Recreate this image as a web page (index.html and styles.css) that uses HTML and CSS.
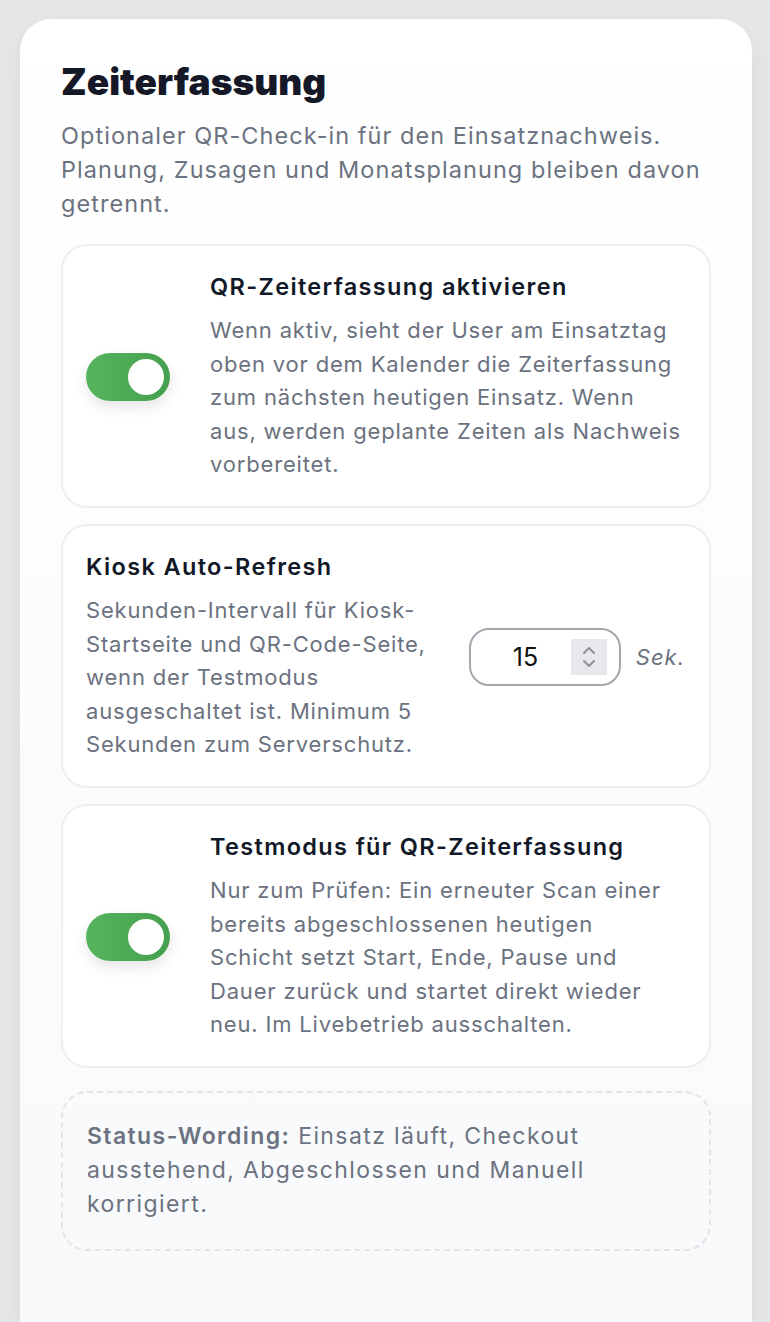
FILE: index.html
```html
<!DOCTYPE html>
<html lang="de">
<head>
<meta charset="UTF-8">
<meta name="viewport" content="width=device-width, initial-scale=1.0">
<title>Zeiterfassung</title>
<link rel="stylesheet" href="styles.css">
</head>
<body>
  <div class="panel">
    <h1>Zeiterfassung</h1>
    <p class="lead">Optionaler QR-Check-in für den Einsatznachweis. Planung, Zusagen und Monatsplanung bleiben davon getrennt.</p>

    <div class="option">
      <div class="switch-col">
        <span class="switch"><span class="knob"></span></span>
      </div>
      <div class="option-text">
        <h3>QR-Zeiterfassung aktivieren</h3>
        <p>Wenn aktiv, sieht der User am Einsatztag oben vor dem Kalender die Zeiterfassung zum nächsten heutigen Einsatz. Wenn aus, werden geplante Zeiten als Nachweis vorbereitet.</p>
      </div>
    </div>

    <div class="option option-plain">
      <div class="option-text">
        <h3>Kiosk Auto-Refresh</h3>
        <p>Sekunden-Intervall für Kiosk-Startseite und QR-Code-Seite, wenn der Testmodus ausgeschaltet ist. Minimum 5 Sekunden zum Serverschutz.</p>
      </div>
      <div class="interval">
        <div class="number-box">
          <span class="number-value">15</span>
          <span class="spinner">
            <svg width="16" height="26" viewBox="0 0 16 26" fill="none" stroke="#8b8f98" stroke-width="2" stroke-linecap="round" stroke-linejoin="round">
              <path d="M3 9 L8 4 L13 9"/>
              <path d="M3 17 L8 22 L13 17"/>
            </svg>
          </span>
        </div>
        <span class="unit">Sek.</span>
      </div>
    </div>

    <div class="option">
      <div class="switch-col">
        <span class="switch"><span class="knob"></span></span>
      </div>
      <div class="option-text">
        <h3>Testmodus für QR-Zeiterfassung</h3>
        <p>Nur zum Prüfen: Ein erneuter Scan einer bereits abgeschlossenen heutigen<br>Schicht setzt Start, Ende, Pause und Dauer zurück und startet direkt wieder neu. Im Livebetrieb ausschalten.</p>
      </div>
    </div>

    <div class="note">
      <p><strong>Status-Wording:</strong> Einsatz läuft, Checkout ausstehend, Abgeschlossen und Manuell korrigiert.</p>
    </div>
  </div>
</body>
</html>
```

FILE: styles.css
```css
body {
  margin: 0;
  background-color: #e6e7e9;
  font-family: Inter, "Noto Sans", sans-serif;
  padding: 19px 18px 0 20px;
}
.panel {
  background: linear-gradient(180deg, #ffffff 0%, #f8f9fb 100%);
  border-radius: 32px 32px 0 0;
  padding: 38px 41px 80px 41px;
  box-shadow: 0 8px 30px rgba(0, 0, 0, 0.06);
  min-height: 1200px;
}
h1 {
  margin: 0;
  font-size: 37px;
  font-weight: 900;
  letter-spacing: 0;
  color: #141827;
  line-height: 50px;
}
.lead {
  margin: 12px 0 23px;
  font-size: 23.5px;
  letter-spacing: 1.05px;
  line-height: 34px;
  color: #6b7280;
}
.option {
  display: flex;
  align-items: center;
  background: #ffffff;
  border: 2px solid #eceef1;
  border-radius: 26px;
  padding: 26px 24px 24px 23px;
  margin-bottom: 16px;
}
.switch-col {
  width: 124px;
  flex-shrink: 0;
}
.switch {
  display: flex;
  align-items: center;
  justify-content: flex-end;
  width: 84px;
  height: 48px;
  border-radius: 24px;
  background: linear-gradient(90deg, #55b45c, #45a04e);
  box-sizing: border-box;
  padding: 0 6px;
  box-shadow: 0 6px 14px rgba(0, 0, 0, 0.10);
}
.knob {
  width: 36px;
  height: 36px;
  border-radius: 50%;
  background: #ffffff;
}
.option-text h3 {
  margin: 0 0 12px;
  font-size: 23.5px;
  font-weight: 600;
  letter-spacing: 1.35px;
  color: #111827;
  line-height: 30px;
}
.option-text p {
  margin: 0;
  font-size: 22px;
  letter-spacing: 0.82px;
  line-height: 33.6px;
  color: #6b7280;
}
.option-plain .option-text {
  flex: 1;
  padding-right: 22px;
}
.interval {
  display: flex;
  align-items: center;
  gap: 15px;
}
.number-box {
  display: flex;
  align-items: center;
  justify-content: space-between;
  width: 152px;
  height: 58px;
  box-sizing: border-box;
  border: 2px solid #a4a7ae;
  border-radius: 20px;
  padding: 0 12px 0 42px;
}
.number-value {
  font-size: 25px;
  color: #111;
}
.spinner {
  display: flex;
  align-items: center;
  justify-content: center;
  width: 36px;
  height: 36px;
  background: #e8e8ec;
}
.unit {
  font-size: 22px;
  font-style: italic;
  letter-spacing: 1px;
  color: #6b7280;
}
.note {
  border: 2px dashed #e2e4e8;
  border-radius: 26px;
  padding: 26px 24px 28px;
  margin-top: 23px;
}
.note p {
  margin: 0;
  font-size: 23px;
  letter-spacing: 1.4px;
  line-height: 34px;
  color: #6b7280;
}
.note strong {
  font-weight: 600;
}
```
